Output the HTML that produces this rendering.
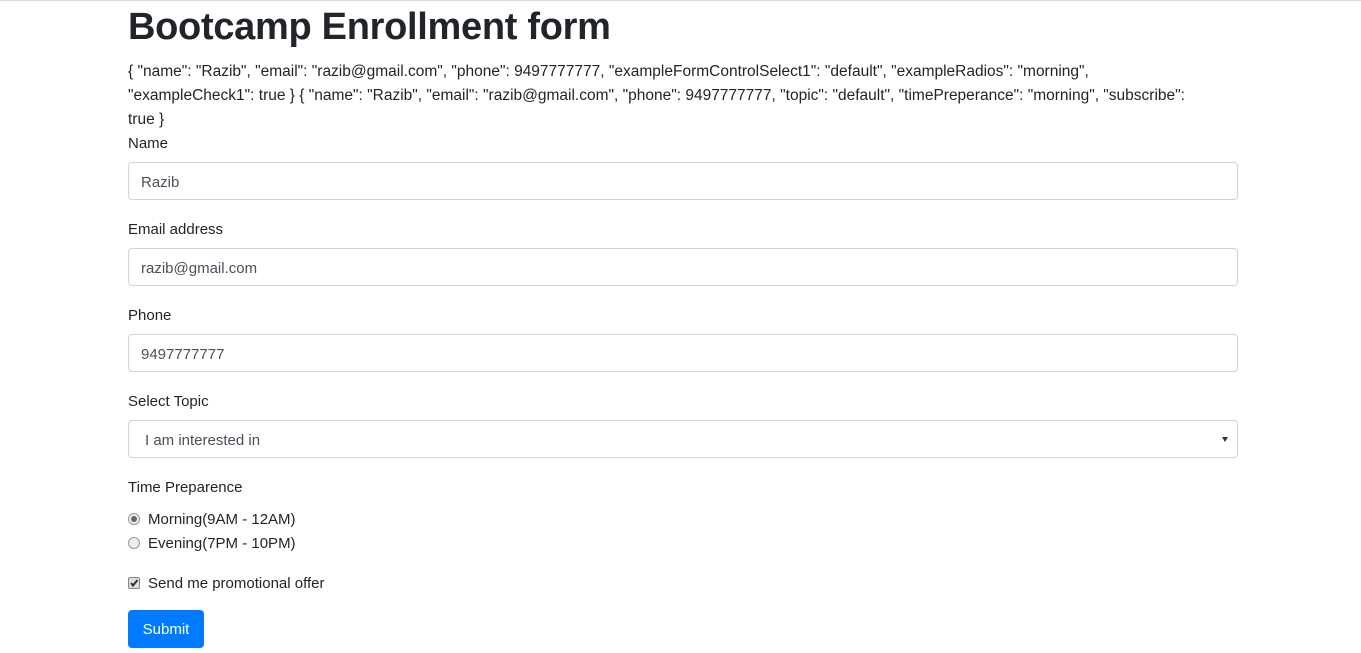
<!DOCTYPE html>
<html><head><meta charset="utf-8"><style>
*{box-sizing:border-box;margin:0;padding:0}
body{width:1361px;height:653px;overflow:hidden;background:#fff;font-family:"Liberation Sans",sans-serif;color:#212529;font-size:15px;position:relative}
.top{position:absolute;left:0;top:0;width:1361px;height:1px;background:#dcdcdc}
.a{position:absolute;left:128px;white-space:nowrap}
h1{font-size:38px;font-weight:bold;top:6px;letter-spacing:-0.3px}
.j{line-height:24px;top:60px;font-size:15.5px}
.l{line-height:20px}
.in{width:1110px;height:38px;border:1px solid #ced4da;border-radius:4px;padding:2px 12px 0;line-height:36px;color:#495057}
.sel{padding-left:16px}
.arr{position:absolute;right:9px;top:16px;width:0;height:0;border-left:3px solid transparent;border-right:3px solid transparent;border-top:5px solid #333}
.r{width:12px;height:12px;border-radius:50%;border:1px solid #999;background:#eee;display:inline-block;vertical-align:-1px;margin-right:8px;position:relative}
.r.on::after{content:"";position:absolute;left:2px;top:2px;width:6px;height:6px;border-radius:50%;background:#666}
.c{width:12px;height:12px;border:1px solid #888;border-radius:2px;background:#ddd;display:inline-block;vertical-align:-1px;margin-right:8px;position:relative}
.btn{top:610px;width:76px;height:38px;background:#007bff;color:#fff;border-radius:4px;text-align:center;line-height:40px;font-size:15px}
</style></head><body>
<div class="top"></div>
<h1 class="a">Bootcamp Enrollment form</h1>
<div class="a j">{ "name": "Razib", "email": "razib@gmail.com", "phone": 9497777777, "exampleFormControlSelect1": "default", "exampleRadios": "morning",<br>"exampleCheck1": true } { "name": "Razib", "email": "razib@gmail.com", "phone": 9497777777, "topic": "default", "timePreperance": "morning", "subscribe":<br>true }</div>
<div class="a l" style="top:134px">Name</div>
<div class="a in" style="top:162px">Razib</div>
<div class="a l" style="top:220px">Email address</div>
<div class="a in" style="top:248px">razib@gmail.com</div>
<div class="a l" style="top:306px">Phone</div>
<div class="a in" style="top:334px">9497777777</div>
<div class="a l" style="top:392px">Select Topic</div>
<div class="a in sel" style="top:420px">I am interested in<span class="arr"></span></div>
<div class="a l" style="top:478px">Time Preparence</div>
<div class="a l" style="top:510px"><span class="r on"></span>Morning(9AM - 12AM)</div>
<div class="a l" style="top:534px"><span class="r"></span>Evening(7PM - 10PM)</div>
<div class="a l" style="top:574px"><span class="c"><svg width="10" height="10" style="position:absolute;left:0;top:0"><path d="M2 5 L4 7.5 L8.5 2" stroke="#333" stroke-width="2" fill="none"/></svg></span>Send me promotional offer</div>
<div class="a btn">Submit</div>
</body></html>
